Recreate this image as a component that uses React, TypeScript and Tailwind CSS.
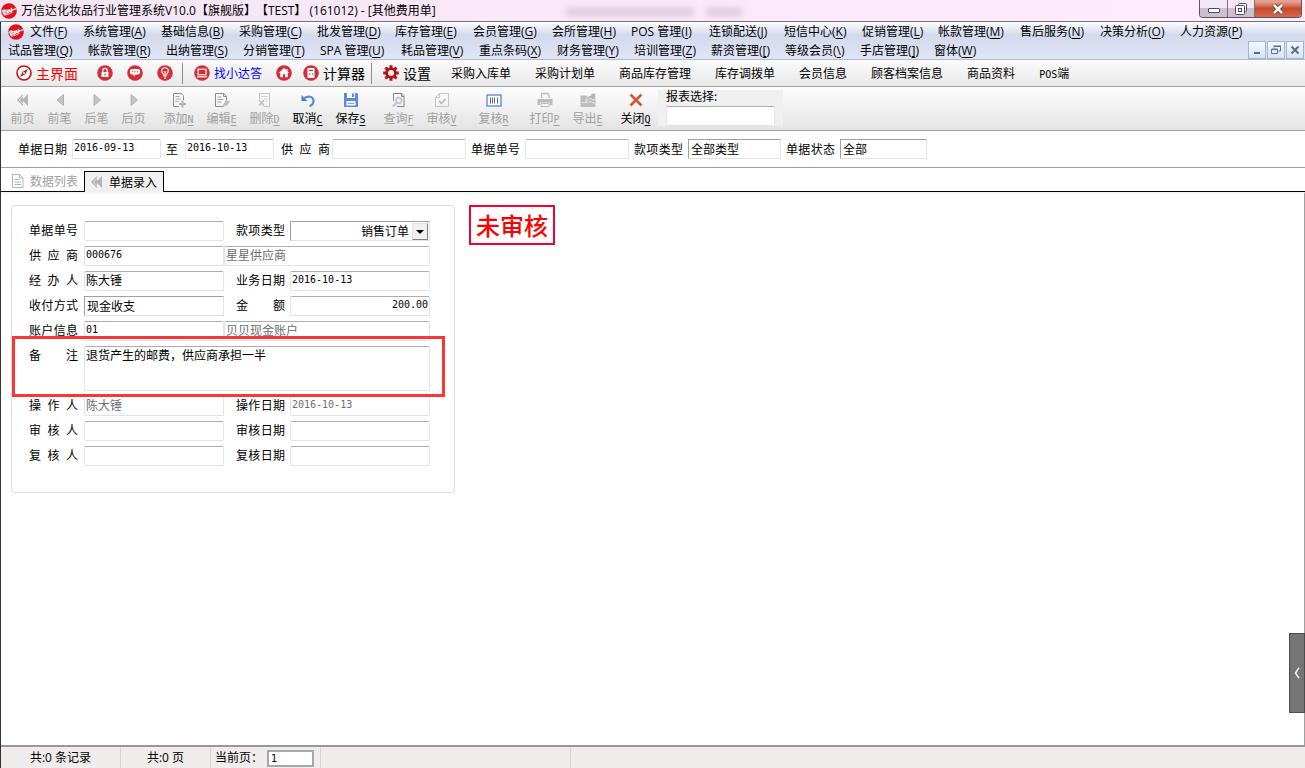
import type { ReactNode } from "react";

const UI = "font-['Open_Sans','Noto_Sans_CJK_SC',sans-serif]";
const INPUT =
  "h-5 min-w-0 rounded-[2px] border border-[#e2e3ea] border-t-[#abadb3] bg-white px-px pb-1 outline-none";
const COMBO =
  "h-5 min-w-0 appearance-none rounded-none border border-[#e3e3e3] border-t-[#a0a0a0] border-l-[#a0a0a0] bg-white px-0.5 outline-none";
const MONO = "font-['DejaVu_Sans_Mono','Noto_Sans_CJK_SC',monospace] text-[10px]";

type MenuEntry = { label: string; hot: string; width: string };

const MENU_TOP: MenuEntry[] = [
  { label: "文件", hot: "F", width: "w-[53px]" },
  { label: "系统管理", hot: "A", width: "w-[78px]" },
  { label: "基础信息", hot: "B", width: "w-[78px]" },
  { label: "采购管理", hot: "C", width: "w-[78px]" },
  { label: "批发管理", hot: "D", width: "w-[78px]" },
  { label: "库存管理", hot: "E", width: "w-[78px]" },
  { label: "会员管理", hot: "G", width: "w-[79px]" },
  { label: "会所管理", hot: "H", width: "w-[79px]" },
  { label: "POS 管理", hot: "I", width: "w-[78px]" },
  { label: "连锁配送", hot: "J", width: "w-[75px]" },
  { label: "短信中心", hot: "K", width: "w-[78px]" },
  { label: "促销管理", hot: "L", width: "w-[76px]" },
  { label: "帐款管理", hot: "M", width: "w-[82px]" },
  { label: "售后服务", hot: "N", width: "w-[80px]" },
  { label: "决策分析", hot: "O", width: "w-[80px]" },
  { label: "人力资源", hot: "P", width: "w-16" },
];

const MENU_BOTTOM: MenuEntry[] = [
  { label: "试品管理", hot: "Q", width: "w-[80px]" },
  { label: "帐款管理", hot: "R", width: "w-[78px]" },
  { label: "出纳管理", hot: "S", width: "w-[77px]" },
  { label: "分销管理", hot: "T", width: "w-[77px]" },
  { label: "SPA 管理", hot: "U", width: "w-[81px]" },
  { label: "耗品管理", hot: "V", width: "w-[78px]" },
  { label: "重点条码", hot: "X", width: "w-[78px]" },
  { label: "财务管理", hot: "Y", width: "w-[77px]" },
  { label: "培训管理", hot: "Z", width: "w-[77px]" },
  { label: "薪资管理", hot: "[", width: "w-[74px]" },
  { label: "等级会员", hot: "\\", width: "w-[75px]" },
  { label: "手店管理", hot: "]", width: "w-[74px]" },
  { label: "窗体", hot: "W", width: "w-[53px]" },
];

function MenuRow({ items }: { items: MenuEntry[] }) {
  return (
    <div className="flex h-[19px] items-center">
      {items.map((m) => (
        <button key={m.hot} type="button" className={`${m.width} shrink-0 text-left leading-4 whitespace-nowrap`}>
          {m.label}(<u className="underline-offset-2">{m.hot}</u>)
        </button>
      ))}
    </div>
  );
}

function Logo() {
  return (
    <svg viewBox="0 0 16 16" className="size-4 shrink-0" aria-hidden="true">
      <circle cx="8" cy="8" r="7.8" fill="#e0101c" />
      <g fill="none" stroke="#fff" strokeLinecap="round" strokeLinejoin="round">
        <path d="M1.200 8.600c1-1.400 3-2 3.200-1 .2 1-2.400 1.600-2 3 .4 1 2.400 0 3.400-1.400" strokeWidth="1.300" />
        <path d="M5.600 7.200c1.400-.6 1 1.400.2 2.600 1.400.4 2.600-.8 3-2.200.4-1.400-1.400-1-1.200.2.200 1 1.800.8 2.800-.2" strokeWidth="1.200" />
        <path d="M10.200 5.400c.8.4.4 2-.2 3.200 1-1.800 2.200-2.600 4.800-2.800" strokeWidth="1.200" />
        <path d="M3.500 12.200c2.500-.4 5-1.400 7.500-2.600" strokeWidth=".8" />
      </g>
    </svg>
  );
}

function Disc({ children }: { children: ReactNode }) {
  return (
    <svg viewBox="0 0 16 16" className="size-4 shrink-0" aria-hidden="true">
      <circle cx="8" cy="8" r="7.800" fill="#d22f3a" />
      {children}
    </svg>
  );
}

const CompassIcon = () => (
  <svg viewBox="0 0 16 16" className="size-4 shrink-0" aria-hidden="true">
    <circle cx="8" cy="8" r="7" fill="#fff" stroke="#c1121f" strokeWidth="1.6" />
    <path d="M12 4 9.300 9.300 4 12l2.700-5.300z" fill="#c1121f" />
    <circle cx="8" cy="8" r="1" fill="#fff" />
  </svg>
);
const LockIcon = () => (
  <Disc>
    <path d="M5.800 7V5.500a2.200 2.200 0 0 1 4.400 0V7" fill="none" stroke="#fff" strokeWidth="1.200" />
    <rect x="4.500" y="7" width="7" height="5" rx=".6" fill="#fff" />
    <path d="M8 8.500v2" stroke="#d22f3a" strokeWidth="1.200" />
  </Disc>
);
const ChatIcon = () => (
  <Disc>
    <path d="M5 4h6a2 2 0 0 1 2 2v1.500a2 2 0 0 1-2 2H8.500L7 11.800 6.300 9.500H5a2 2 0 0 1-2-2V6a2 2 0 0 1 2-2z" fill="#fff" />
    <path d="M5 6.300h1.200v1H5zM7.400 6.300h1.200v1H7.400zM9.800 6.300H11v1H9.800z" fill="#d22f3a" />
  </Disc>
);
const BulbIcon = () => (
  <Disc>
    <path d="M6.700 10.200C6.600 8.800 4.700 8.200 4.700 6a3.300 3.300 0 0 1 6.600 0c0 2.200-1.900 2.800-2 4.200z" fill="none" stroke="#fff" strokeWidth="1.100" />
    <path d="M6.600 11.800h2.800M7.200 13.300h1.600M6.800 6.200 8 7.800l1.200-1.600M8 7.800V10" fill="none" stroke="#fff" />
  </Disc>
);
const MonitorIcon = () => (
  <Disc>
    <rect x="4" y="4.200" width="8" height="5.600" fill="none" stroke="#fff" strokeWidth="1.100" />
    <path d="M3 11.800h10" stroke="#fff" strokeWidth="1.200" />
  </Disc>
);
const HomeIcon = () => (
  <Disc>
    <path d="M8 3 2.800 8h1.500v4.200h2.600V9.300h2.200v2.900h2.600V8h1.500L11.500 6.300V4h-1.300v1z" fill="#fff" />
  </Disc>
);
const CalcIcon = () => (
  <Disc>
    <rect x="4.500" y="3" width="7" height="10" rx=".8" fill="#fff" />
    <path d="M6 4.800h4v1.200H6zM6 8.500h1.200v1.200H6zM9 8.500h1.200v1.200H9z" fill="#d22f3a" />
  </Disc>
);
const GearIcon = () => (
  <svg viewBox="0 0 16 16" className="size-4 shrink-0" aria-hidden="true">
    <circle cx="8" cy="8" r="4.400" fill="none" stroke="#b5121b" strokeWidth="2.800" />
    <path
      d="M8 .2v3M8 12.800v3M.2 8h3M12.800 8h3M2.500 2.500l2.100 2.100M11.400 11.400l2.100 2.100M13.500 2.500l-2.100 2.100M4.600 11.400l-2.100 2.100"
      stroke="#b5121b"
      strokeWidth="3"
    />
  </svg>
);

function Glyph({ children }: { children: ReactNode }) {
  return (
    <svg viewBox="0 0 16 16" className="size-4 shrink-0" fill="none" aria-hidden="true">
      {children}
    </svg>
  );
}
const DoubleLeft = () => (
  <Glyph>
    <path d="M8 2v12L2 8zM13 2v12L7 8z" fill="#b4b4b4" />
    <path d="M8.500 3.500 4.500 8l4 4.500" stroke="#eee" strokeWidth=".8" />
  </Glyph>
);
const LeftArrow = () => (
  <Glyph>
    <path d="M11.500 2.500v11L5 8z" fill="#c4c4c4" stroke="#a6a6a6" strokeWidth=".8" />
  </Glyph>
);
const RightArrow = () => (
  <Glyph>
    <path d="M5 2.500v11L11.500 8z" fill="#c4c4c4" stroke="#a6a6a6" strokeWidth=".8" />
  </Glyph>
);
const AddDoc = () => (
  <Glyph>
    <path d="M8 14.500H2.500v-13h8l2 2V8" stroke="#8c8c8c" />
    <path d="M4.500 4.500h4M4.500 7h5.500M4.500 9.500h3" stroke="#a8a8a8" />
    <path d="M11.500 8.500v7M8 12h7" stroke="#b4b4b4" strokeWidth="2" />
  </Glyph>
);
const EditDoc = () => (
  <Glyph>
    <path d="M12.500 8V4.500l-3-3h-8v13h8" stroke="#8c8c8c" />
    <path d="M9.500 1.500v3h3" stroke="#8c8c8c" />
    <path d="M3.500 5h4M3.500 7.500h6M3.500 10h4" stroke="#a8a8a8" />
    <path d="m9 13 3-5 4 1.500-3 4-4 1z" fill="#bdbdbd" />
  </Glyph>
);
const DeleteDoc = () => (
  <Glyph>
    <path d="M2.500 7V1.500h10v13h-6" stroke="#c4c4c4" />
    <path d="M4.500 4.500h6M7 7h3.500M8.500 9.500h2" stroke="#cfcfcf" />
    <path d="m2 8 5 5.500M7 8l-5 5.500" stroke="#bdbdbd" strokeWidth="1.200" />
  </Glyph>
);
const UndoIcon = () => (
  <Glyph>
    <path d="M1.500 3v6h6z" fill="#4a7bd0" />
    <path d="M3.500 7C6.500 3.500 13.500 3.800 13.500 9c0 2.500-1.500 4.300-4 5" stroke="#5b88d6" strokeWidth="2.200" />
  </Glyph>
);
const SaveIcon = () => (
  <Glyph>
    <path d="M1 1h13l1 1v13H1z" fill="#5b8bdc" />
    <path d="M4 1h8v5H4zM3.500 9h9v4.500h-9z" fill="#fff" />
    <path d="M9 1.500h2V5H9zM5 10.800h6v1H5z" fill="#5b8bdc" />
  </Glyph>
);
const SearchDoc = () => (
  <Glyph>
    <path d="M2.500 9V1.500h8l2.500 3v10H6" stroke="#848484" />
    <path d="M10.500 1.500v3H13" stroke="#848484" />
    <circle cx="7.800" cy="8.500" r="2.800" fill="#eef1f8" stroke="#c0c5d4" strokeWidth="1.800" />
    <path d="m5.500 11-3.500 3.500" stroke="#c0c5d4" strokeWidth="2.400" />
  </Glyph>
);
const CheckDoc = () => (
  <Glyph>
    <path d="M5.500 1.500h9v13h-13v-9zM5.500 1.500v4h-4" stroke="#c6c6c6" />
    <path d="m5 9 2.300 2.500L11.500 7" stroke="#b4b4b4" strokeWidth="1.400" />
  </Glyph>
);
const BarcodeIcon = () => (
  <Glyph>
    <rect x="1" y="3" width="14" height="11" fill="#fff" stroke="#5f8fde" strokeWidth="1.400" />
    <path d="M4.500 5.500v6M6.500 5.500v6M8.500 5.500v6M11.500 5.500v6" stroke="#666" />
  </Glyph>
);
const PrintIcon = () => (
  <Glyph>
    <path d="M4.500 6V1.500h6l1.500 1.500v3" stroke="#bcbcbc" strokeWidth="1.300" />
    <path d="M.5 7h15v6h-2.500v-2.500H3V13H.5z" fill="#bcbcbc" />
    <path d="M4 11.500h8v3H4z" fill="#f4f4f4" stroke="#bcbcbc" />
  </Glyph>
);
const ExportIcon = () => (
  <Glyph>
    <path d="M.5 3.500h6l2 2.500h7v9H.5z" fill="#bdbdbd" />
    <path d="M6 9.500c0-4 2-6 5-6V1.500h4.500v5L13 8l-2-1.500C9 6.500 7.500 7.500 6 9.500z" fill="#b4b4b4" stroke="#eee" strokeWidth=".8" />
    <path d="M2 10.500h5l3-1 5 2" stroke="#ececec" strokeWidth=".8" />
  </Glyph>
);
const CloseIcon = () => (
  <Glyph>
    <path d="m2.500 2.500 11 11M13.500 2.500l-11 11" stroke="#d2583c" strokeWidth="2.600" />
  </Glyph>
);
const PageIcon = () => (
  <Glyph>
    <path d="M2.500 14.500v-13h7l3.500 3.500v9.500z" stroke="#b4b4b4" />
    <path d="M9.500 1.500V5H13M4.500 6.500h5M4.500 9h6.500M4.500 11.500h6.500" stroke="#b4b4b4" />
  </Glyph>
);

function QuickButton({ icon, label, tone = "", text = "text-sm" }: { icon: ReactNode; label: string; tone?: string; text?: string }) {
  return (
    <button type="button" className={`flex items-center gap-1 leading-none whitespace-nowrap ${tone} ${text}`}>
      {icon}
      {label}
    </button>
  );
}

function ToolButton({ icon, label, hot, on = false }: { icon: ReactNode; label: string; hot?: string; on?: boolean }) {
  return (
    <button
      type="button"
      disabled={!on}
      className={`flex shrink-0 flex-col items-center gap-0.5 leading-4 whitespace-nowrap ${hot ? "w-[43px]" : "w-[37px]"} ${on ? "text-black" : "text-[#a0a0a0]"}`}
    >
      {icon}
      <span>
        {label}
        {hot && <u className={`${MONO} underline-offset-2`}>{hot}</u>}
      </span>
    </button>
  );
}

function Label({ htmlFor, children }: { htmlFor: string; children: string }) {
  return (
    <label htmlFor={htmlFor} className="w-[49px] shrink-0 leading-[18px] whitespace-nowrap [text-align-last:justify]">
      {children}
    </label>
  );
}

const SHORTCUTS = ["采购入库单", "采购计划单", "商品库存管理", "库存调拨单", "会员信息", "顾客档案信息", "商品资料"];

function TitleBar() {
  return (
    <header className={`relative flex h-[22px] items-center overflow-hidden border-b border-[#77727a] bg-linear-to-r from-[#f3e6f3] via-[#fbe9fa] to-[#fdeefb] pl-px ${UI}`}>
      <Logo />
      <h1 className="ml-1 text-[12px] leading-5 whitespace-nowrap [text-spacing-trim:space-all]">万信达化妆品行业管理系统V10.0【旗舰版】【TEST】 (161012) - [其他费用单]</h1>
      <div className="absolute top-2 left-[566px] flex gap-3 opacity-25 blur-[3px]" aria-hidden="true">
        <span className="h-2 w-32 bg-[#806f80]" />
        <span className="h-2 w-9 bg-[#806f80]" />
      </div>
      <div className="mr-[3px] ml-auto flex h-[18px] self-start overflow-hidden rounded-b border border-t-0 border-[#5e5560] shadow-[0_0_2px_#fff]">
        <button type="button" aria-label="最小化" className="flex w-7 items-center justify-center border-r border-[#7a717c] bg-linear-to-b from-[#f3e8f3] from-45% to-[#cdbfce] to-50%">
          <svg viewBox="0 0 14 12" className="h-3 w-3.5" aria-hidden="true">
            <rect x="1.500" y="5.500" width="11" height="4" rx=".5" fill="#fff" stroke="#4c4d5c" />
          </svg>
        </button>
        <button type="button" aria-label="还原" className="flex w-[27px] items-center justify-center border-r border-[#7a717c] bg-linear-to-b from-[#f3e8f3] from-45% to-[#cdbfce] to-50%">
          <svg viewBox="0 0 14 14" className="size-3.5" fill="#fff" stroke="#4c4d5c" aria-hidden="true">
            <rect x="4.500" y="1.500" width="8" height="8" rx="1" />
            <rect x="1.500" y="3.500" width="9" height="9" rx="1" />
            <rect x="4.500" y="6.500" width="3" height="3" />
          </svg>
        </button>
        <button type="button" aria-label="关闭窗口" className="flex w-[46px] items-center justify-center bg-linear-to-b from-[#e3a095] from-10% via-[#c9492f] via-50% to-[#d8684a]">
          <svg viewBox="0 0 14 12" className="h-3 w-3.5" aria-hidden="true">
            <path d="m3 2 8 8M11 2l-8 8" stroke="#54343a" strokeWidth="4.200" />
            <path d="m3 2 8 8M11 2l-8 8" stroke="#fff" strokeWidth="2.600" />
          </svg>
        </button>
      </div>
    </header>
  );
}

const MDI = "flex h-[18px] w-[18px] items-center justify-center border border-[#a3b6cf] bg-linear-to-b from-[#f2f8fe] to-[#d5e5f5]";

function MenuBar() {
  return (
    <nav className={`flex h-[38px] border-b border-[#b2b6d0] bg-linear-to-b from-[#fdfdfe] from-0% via-[#d4daed] via-35% to-[#e0e6f5] text-[12px] ${UI}`}>
      <div className="min-w-0 grow">
        <div className="flex items-center gap-1.5 pl-[7px]">
          <Logo />
          <MenuRow items={MENU_TOP} />
        </div>
        <div className="pl-[7px]">
          <MenuRow items={MENU_BOTTOM} />
        </div>
      </div>
      <div className="mr-px flex shrink-0 gap-px self-end">
        <button type="button" aria-label="最小化子窗口" className={MDI}>
          <svg viewBox="0 0 12 12" className="size-3" aria-hidden="true">
            <path d="M3 9h6" stroke="#5d6d85" strokeWidth="2" />
          </svg>
        </button>
        <button type="button" aria-label="还原子窗口" className={MDI}>
          <svg viewBox="0 0 12 12" className="size-3" fill="none" stroke="#5d6d85" aria-hidden="true">
            <path d="M4 3.500V2.500h6.500V7H8.500M3.500 2h7.500" />
            <path d="M1.500 5.500h6v4h-6zM1.500 5h6" />
          </svg>
        </button>
        <button type="button" aria-label="关闭子窗口" className={MDI}>
          <svg viewBox="0 0 12 12" className="size-3" aria-hidden="true">
            <path d="m2.500 2.500 7 7M9.500 2.500l-7 7" stroke="#5d6d85" strokeWidth="2" />
          </svg>
        </button>
      </div>
    </nav>
  );
}

function QuickBar() {
  return (
    <div className="flex h-[27px] items-center border-b border-[#a0a0a0] bg-linear-to-b from-[#fbfbfb] to-[#e9e9e9] pl-[15px]">
      <QuickButton icon={<CompassIcon />} label="主界面" tone="text-[#ff0000]" />
      <div className="ml-[19px] flex gap-3.5">
        <button type="button" aria-label="锁定"><LockIcon /></button>
        <button type="button" aria-label="消息"><ChatIcon /></button>
        <button type="button" aria-label="提示"><BulbIcon /></button>
      </div>
      <span className="ml-[9px] h-[21px] w-px bg-[#8c8c8c]" />
      <div className="ml-[11px] flex items-center gap-[11px]">
        <QuickButton icon={<MonitorIcon />} label="找小达答" tone="text-[#0000ff]" text="text-xs" />
        <button type="button" aria-label="首页" className="ml-[3px]"><HomeIcon /></button>
        <QuickButton icon={<CalcIcon />} label="计算器" />
      </div>
      <span className="ml-1.5 h-[21px] w-px bg-[#8c8c8c]" />
      <div className="ml-[11px]">
        <QuickButton icon={<GearIcon />} label="设置" />
      </div>
      <div className="ml-5 flex gap-6 text-xs whitespace-nowrap">
        {SHORTCUTS.map((s) => (
          <button key={s} type="button">{s}</button>
        ))}
        <button type="button"><span className={MONO}>POS</span>端</button>
      </div>
    </div>
  );
}

function ToolBar() {
  return (
    <div className="flex h-11 border-b border-[#a0a0a0] bg-linear-to-b from-[#fdfdfd] to-[#e4e4e4] pt-[5px] pl-[3px]">
      <ToolButton icon={<DoubleLeft />} label="前页" />
      <ToolButton icon={<LeftArrow />} label="前笔" />
      <ToolButton icon={<RightArrow />} label="后笔" />
      <ToolButton icon={<RightArrow />} label="后页" />
      <div className="ml-[5px] flex">
        <ToolButton icon={<AddDoc />} label="添加" hot="N" />
        <ToolButton icon={<EditDoc />} label="编辑" hot="E" />
        <ToolButton icon={<DeleteDoc />} label="删除" hot="D" />
        <ToolButton icon={<UndoIcon />} label="取消" hot="C" on />
        <ToolButton icon={<SaveIcon />} label="保存" hot="S" on />
      </div>
      <div className="ml-[5px] flex">
        <ToolButton icon={<SearchDoc />} label="查询" hot="F" />
        <ToolButton icon={<CheckDoc />} label="审核" hot="V" />
      </div>
      <div className="ml-[9px] flex">
        <ToolButton icon={<BarcodeIcon />} label="复核" hot="R" />
      </div>
      <div className="ml-2 flex">
        <ToolButton icon={<PrintIcon />} label="打印" hot="P" />
        <ToolButton icon={<ExportIcon />} label="导出" hot="E" />
      </div>
      <div className="ml-[5px] flex">
        <ToolButton icon={<CloseIcon />} label="关闭" hot="Q" on />
      </div>
      <div className="-mt-0.5 ml-px flex h-9 w-[125px] flex-col bg-[#f0f0f0] px-2">
        <label htmlFor="report" className="h-4 leading-3">报表选择:</label>
        <input id="report" className={`${INPUT} w-full`} />
      </div>
    </div>
  );
}

function FilterBar() {
  return (
    <form className="flex h-[37px] items-center gap-[5px] border-b border-[#a0a0a0] pl-[17px]">
      <Label htmlFor="from">单据日期</Label>
      <input id="from" defaultValue="2016-09-13" className={`${INPUT} ${MONO} w-[89px]`} />
      <label htmlFor="to">至</label>
      <input id="to" defaultValue="2016-10-13" className={`${INPUT} ${MONO} ml-0.5 w-[89px]`} />
      <div className="ml-0.5 flex items-center gap-0.5">
        <Label htmlFor="f-supplier">供 应 商</Label>
        <input id="f-supplier" className={`${INPUT} w-[134px]`} />
      </div>
      <Label htmlFor="f-number">单据单号</Label>
      <input id="f-number" className={`${INPUT} w-[104px]`} />
      <Label htmlFor="f-type">款项类型</Label>
      <select id="f-type" className={`${COMBO} w-[93px]`}>
        <option>全部类型</option>
      </select>
      <Label htmlFor="f-state">单据状态</Label>
      <select id="f-state" className={`${COMBO} w-[87px]`}>
        <option>全部</option>
      </select>
    </form>
  );
}

function Tabs() {
  return (
    <div role="tablist" className="flex h-6 items-end border-b border-black pl-[9px]">
      <button type="button" role="tab" aria-selected="false" className="flex h-5 w-[74px] items-center gap-1 whitespace-nowrap text-[#a0a0a0]">
        <PageIcon />
        数据列表
      </button>
      <button type="button" role="tab" aria-selected="true" className="-mb-px flex h-[21px] w-20 items-center gap-1 border border-b-0 border-black bg-[#f0f0f0] pl-1 whitespace-nowrap">
        <DoubleLeft />
        单据录入
      </button>
    </div>
  );
}

function PairRow({ children }: { children: ReactNode }) {
  return <div className="flex h-5 items-start">{children}</div>;
}

function EntryForm() {
  const first = "ml-1.5 w-[140px]";
  const second = "ml-[5px] w-[140px]";
  return (
    <form className="flex w-[444px] shrink-0 flex-col gap-[5px] rounded border border-[#d5dfe5] px-[17px] pt-[15px] pb-[26px]">
      <PairRow>
        <Label htmlFor="number">单据单号</Label>
        <input id="number" className={`${INPUT} ${first}`} />
        <span className="w-3" />
        <Label htmlFor="type">款项类型</Label>
        <div className={`relative ${second}`}>
          <select id="type" className={`${COMBO} block w-full pr-[20px] text-right [text-align-last:right]`}>
            <option>销售订单</option>
          </select>
          <span className="pointer-events-none absolute top-0.5 right-0.5 flex h-[17px] w-4 items-center justify-center border border-[#e3e3e3] border-r-[#808080] border-b-[#808080] bg-[#f0f0f0]">
            <svg viewBox="0 0 8 4" className="h-1 w-2" aria-hidden="true">
              <path d="M0 0h8L4 4z" />
            </svg>
          </span>
        </div>
      </PairRow>
      <PairRow>
        <Label htmlFor="supplier">供 应 商</Label>
        <input id="supplier" defaultValue="000676" className={`${INPUT} ${MONO} ${first}`} />
        <input aria-label="供应商名称" readOnly defaultValue="星星供应商" className={`${INPUT} w-[206px] text-[#6d6d6d]`} />
      </PairRow>
      <PairRow>
        <Label htmlFor="handler">经 办 人</Label>
        <input id="handler" defaultValue="陈大锤" className={`${INPUT} ${first}`} />
        <span className="w-3" />
        <Label htmlFor="date">业务日期</Label>
        <input id="date" defaultValue="2016-10-13" className={`${INPUT} ${MONO} ${second}`} />
      </PairRow>
      <PairRow>
        <Label htmlFor="method">收付方式</Label>
        <select id="method" className={`${COMBO} ${first}`}>
          <option>现金收支</option>
        </select>
        <span className="w-3" />
        <Label htmlFor="amount">金 额</Label>
        <input id="amount" defaultValue="200.00" className={`${INPUT} ${MONO} ${second} text-right`} />
      </PairRow>
      <PairRow>
        <Label htmlFor="account">账户信息</Label>
        <input id="account" defaultValue="01" className={`${INPUT} ${MONO} ${first}`} />
        <input aria-label="账户名称" readOnly defaultValue="贝贝现金账户" className={`${INPUT} w-[206px] text-[#6d6d6d]`} />
      </PairRow>
      <div className="relative flex items-start">
        <Label htmlFor="remark">备 注</Label>
        <textarea
          id="remark"
          defaultValue="退货产生的邮费，供应商承担一半"
          className="ml-1.5 block h-[45px] w-[346px] resize-none rounded-[2px] border border-[#e2e3ea] border-t-[#abadb3] bg-white px-px leading-4 outline-none"
        />
        <div className="pointer-events-none absolute -top-2.5 -right-2 -bottom-1.5 -left-[17px] border-3 border-[#fb3636]" />
      </div>
      <PairRow>
        <Label htmlFor="operator">操 作 人</Label>
        <input id="operator" readOnly defaultValue="陈大锤" className={`${INPUT} ${first} text-[#6d6d6d]`} />
        <span className="w-3" />
        <Label htmlFor="op-date">操作日期</Label>
        <input id="op-date" readOnly defaultValue="2016-10-13" className={`${INPUT} ${MONO} ${second} text-[#6d6d6d]`} />
      </PairRow>
      <PairRow>
        <Label htmlFor="auditor">审 核 人</Label>
        <input id="auditor" readOnly className={`${INPUT} ${first}`} />
        <span className="w-3" />
        <Label htmlFor="audit-date">审核日期</Label>
        <input id="audit-date" readOnly className={`${INPUT} ${second}`} />
      </PairRow>
      <PairRow>
        <Label htmlFor="reviewer">复 核 人</Label>
        <input id="reviewer" readOnly className={`${INPUT} ${first}`} />
        <span className="w-3" />
        <Label htmlFor="review-date">复核日期</Label>
        <input id="review-date" readOnly className={`${INPUT} ${second}`} />
      </PairRow>
    </form>
  );
}

function StatusBar() {
  return (
    <footer className={`flex h-[23px] items-center border-t-2 border-[#989898] bg-[#f0ecec] pt-px text-[12px] whitespace-nowrap ${UI}`}>
      <span className="flex h-5 w-[120px] items-center justify-center border-r border-[#d6d2d2]">共:0 条记录</span>
      <span className="flex h-5 w-[90px] items-center justify-center border-r border-[#d6d2d2]">共:0 页</span>
      <div className="flex h-5 w-[110px] items-center justify-between border-r border-[#d6d2d2] pr-1.5 pl-1">
        <label htmlFor="page">当前页：</label>
        <input id="page" defaultValue="1" className={`${MONO} h-[17px] w-[47px] border-2 border-[#a5a8ae] bg-white px-0.5 outline-none`} />
      </div>
      <span className="h-5 w-[250px] border-r border-[#d6d2d2]" />
    </footer>
  );
}

export default function App() {
  return (
    <div className="flex min-h-screen flex-col bg-white font-['Noto_Sans_CJK_SC',sans-serif] text-xs text-black">
      <TitleBar />
      <div className="flex grow flex-col border-l border-[#30353c]">
        <MenuBar />
        <QuickBar />
        <ToolBar />
        <FilterBar />
        <Tabs />
        <main className="relative flex grow items-start gap-3.5 border-t-2 border-r border-t-[#f3f3f3] border-r-[#a0a0a0] pt-[11px] pl-2.5">
          <EntryForm />
          <div className="flex h-10 w-[86px] items-center justify-center border-2 border-[#f5002f] text-2xl leading-none font-medium whitespace-nowrap text-[#ff0000]">未审核</div>
          <button type="button" aria-label="展开侧栏" className="absolute -right-px bottom-8 flex h-20 w-4 items-center justify-center border border-[#4c4c4c] bg-[#757575]">
            <svg viewBox="0 0 6 12" className="h-3 w-1.5" fill="none" aria-hidden="true">
              <path d="M5 .8 1.500 6 5 11.200" stroke="#eee" strokeWidth="1.600" />
            </svg>
          </button>
        </main>
        <StatusBar />
      </div>
    </div>
  );
}
